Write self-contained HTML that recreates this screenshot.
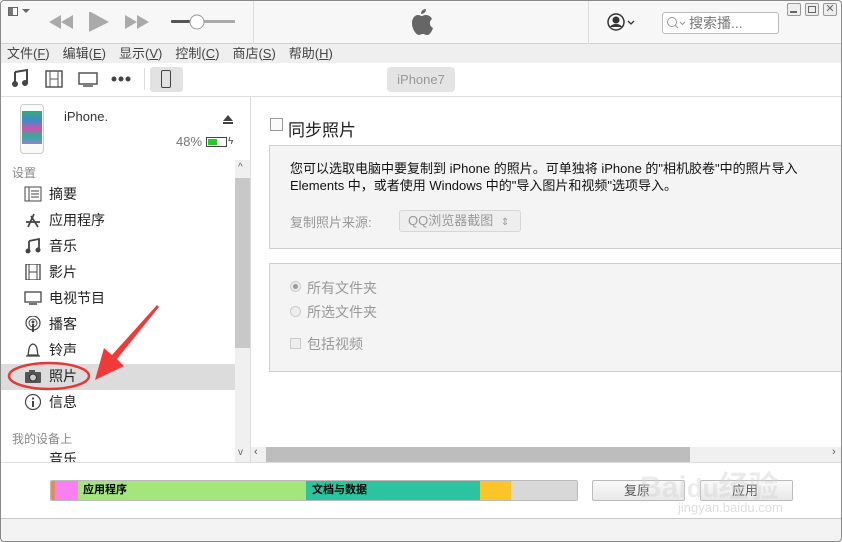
<!DOCTYPE html>
<html><head><meta charset="utf-8"><style>
*{margin:0;padding:0;box-sizing:border-box}
body{width:842px;height:542px;overflow:hidden;background:#fff;font-family:"Liberation Sans","Noto Sans CJK SC",sans-serif;color:#222;position:relative}
.a{position:absolute}
.win{left:0;top:0;width:842px;height:542px;border:1px solid #8a8a8a;border-radius:4px}
.menu span{margin-right:13px}
.side{font-size:14px}
.item{left:0;width:235px;height:26px;line-height:26px;padding-left:49px}
.ic{position:absolute;left:24px;top:5px;width:18px;height:16px}
.p{background:#f4f4f4;border:1px solid #cfcfcf}
.g{color:#999}
</style></head><body>
<div class="a" style="left:0;top:0;width:842px;height:44px;background:#f7f7f7;border-bottom:1px solid #cfcfcf"></div>
<div class="a" style="left:253px;top:0;width:1px;height:44px;background:#ddd"></div>
<div class="a" style="left:588px;top:0;width:1px;height:44px;background:#ddd"></div>
<div class="a" style="left:8px;top:7px;width:10px;height:9px;border:1px solid #666;background:linear-gradient(90deg,#777 50%,#fff 50%)"></div>
<div class="a" style="left:22px;top:9px;width:0;height:0;border:4px solid transparent;border-top:4px solid #666"></div>
<svg class="a" style="left:45px;top:12px" width="210" height="20"><g fill="#aaa"><path d="M4 10L16 3V17Z M16 10L28 3V17Z"/><path d="M44 0L64 11L44 21Z" transform="translate(-0,-1)"/><path d="M80 3L92 10L80 17Z M92 3L104 10L92 17Z"/></g><rect x="126" y="8" width="30" height="3" fill="#555" rx="1"/><rect x="156" y="8" width="34" height="3" fill="#aaa" rx="1"/><circle cx="152" cy="10" r="7" fill="#fff" stroke="#999"/></svg>
<svg class="a" style="left:407px;top:8px" width="28" height="30" viewBox="0 0 28 30"><path fill="#666" d="M19 1c0 3-2 5-5 5 0-3 2-5 5-5zM14 8c2 0 3-1 5-1 3 0 5 2 6 4-3 2-3 7 1 9-1 3-3 7-6 7-2 0-2-1-4-1s-3 1-4 1c-3 0-7-6-7-12 0-5 3-8 6-8 2 0 3 1 3 1z"/></svg>
<svg class="a" style="left:607px;top:12px" width="32" height="20"><circle cx="9" cy="10" r="8" fill="none" stroke="#333" stroke-width="1.5"/><circle cx="9" cy="8" r="3.5" fill="#333"/><path d="M3 15c2-4 10-4 12 0" fill="#333"/><path d="M21 9l3 3 3-3" stroke="#333" fill="none" stroke-width="1.3"/></svg>
<div class="a" style="left:662px;top:12px;width:117px;height:22px;border:1px solid #bbb;border-radius:3px;background:#fff;font-size:14px;line-height:20px;color:#777;padding-left:26px">搜索播...</div>
<svg class="a" style="left:666px;top:16px" width="22" height="14"><circle cx="6" cy="6" r="4.5" fill="none" stroke="#999"/><path d="M9 9l3 3M14 6l2.5 2.5 2.5-2.5" stroke="#999" fill="none"/></svg>
<div class="a" style="left:787px;top:3px;width:14px;height:13px;border:1px solid #999;border-radius:2px;background:#eee"></div>
<div class="a" style="left:805px;top:3px;width:14px;height:13px;border:1px solid #999;border-radius:2px;background:#eee"></div>
<div class="a" style="left:823px;top:3px;width:14px;height:13px;border:1px solid #999;border-radius:2px;background:#eee;font-size:11px;line-height:11px;text-align:center;color:#666">✕</div>
<div class="a" style="left:790px;top:11px;width:7px;height:2px;background:#666"></div>
<div class="a" style="left:808px;top:6px;width:8px;height:7px;border:1px solid #666"></div>
<div class="a menu" style="left:0;top:44px;width:842px;height:19px;background:#efefef;font-size:13px;line-height:19px;padding-left:7px;color:#444"><span>文件(<u>F</u>)</span><span>编辑(<u>E</u>)</span><span>显示(<u>V</u>)</span><span>控制(<u>C</u>)</span><span>商店(<u>S</u>)</span><span>帮助(<u>H</u>)</span></div>
<div class="a" style="left:0;top:96px;width:842px;height:1px;background:#e0e0e0"></div>
<svg class="a" style="left:10px;top:68px" width="175" height="22"><path d="M5 4L17 2V15" stroke="#444" stroke-width="2" fill="none"/><circle cx="5" cy="16" r="3" fill="#444"/><circle cx="15" cy="15" r="3" fill="#444"/><path d="M5 4V16" stroke="#444" stroke-width="2"/><rect x="36" y="3" width="16" height="16" fill="none" stroke="#555" stroke-width="1.5"/><path d="M40 3V19M48 3V19M40 11H48" stroke="#555"/><rect x="69" y="5" width="18" height="11" fill="none" stroke="#555" stroke-width="1.5"/><path d="M73 18H83" stroke="#555" stroke-width="1.5"/><circle cx="104" cy="11" r="2.5" fill="#444"/><circle cx="111" cy="11" r="2.5" fill="#444"/><circle cx="118" cy="11" r="2.5" fill="#444"/><rect x="134" y="0" width="1" height="22" fill="#ddd"/></svg>
<div class="a" style="left:150px;top:67px;width:33px;height:25px;background:#e2e2e2;border-radius:3px"></div>
<div class="a" style="left:161px;top:70px;width:10px;height:18px;border:1.5px solid #444;border-radius:2px"></div>
<div class="a" style="left:387px;top:67px;width:68px;height:25px;background:#e4e4e4;border-radius:4px;font-size:13px;line-height:25px;text-align:center;color:#999">iPhone7</div>
<div class="a" style="left:250px;top:97px;width:1px;height:365px;background:#ddd"></div>
<div class="a" style="left:20px;top:104px;width:24px;height:50px;border:1px solid #ccc;border-radius:4px;background:#fafafa"></div>
<div class="a" style="left:22px;top:111px;width:20px;height:33px;background:linear-gradient(#3a7,#48c 30%,#c5a 55%,#3a9 75%,#88c)"></div>
<div class="a" style="left:64px;top:109px;font-size:13px;color:#333">iPhone.</div>
<div class="a" style="left:223px;top:110px;width:0;height:0;border:5px solid transparent;border-bottom:6px solid #444"></div>
<div class="a" style="left:223px;top:122px;width:10px;height:2px;background:#444"></div>
<div class="a" style="left:176px;top:134px;font-size:13px;color:#777">48%</div>
<div class="a" style="left:206px;top:137px;width:21px;height:10px;border:1px solid #444;padding:1px"><div style="width:9px;height:6px;background:#2c2"></div></div>
<div class="a" style="left:228px;top:136px;font-size:10px;color:#444">ϟ</div>
<div class="a" style="left:12px;top:164px;font-size:12px;color:#888">设置</div>
<div class="a" style="left:12px;top:430px;font-size:12px;color:#888">我的设备上</div>
<div class="a" style="left:235px;top:160px;width:15px;height:302px;background:#f0f0f0"></div>
<div class="a" style="left:235px;top:178px;width:15px;height:170px;background:#c8c8c8"></div>
<div class="a" style="left:238px;top:162px;font-size:10px;color:#666">^</div>
<div class="a" style="left:238px;top:447px;font-size:10px;color:#666">v</div>
<div class="a" style="left:0;top:364px;width:235px;height:26px;background:#dcdcdc"></div>
<div class="side">
<div class="a item" style="top:181px">摘要<svg class="ic" viewBox="0 0 18 16"><rect x="1" y="1" width="16" height="14" fill="none" stroke="#444"/><path d="M5 1V15M7 5H15M7 8H15M7 11H15" stroke="#444"/></svg></div>
<div class="a item" style="top:207px">应用程序<svg class="ic" viewBox="0 0 18 16"><path d="M4 15L10 2M14 15L7 4M2 10H16" stroke="#444" stroke-width="1.7" fill="none"/></svg></div>
<div class="a item" style="top:233px">音乐<svg class="ic" viewBox="0 0 18 16"><path d="M5 3L15 1V12M5 3V13" stroke="#444" stroke-width="1.8" fill="none"/><circle cx="4" cy="13" r="2.5" fill="#444"/><circle cx="14" cy="12" r="2.5" fill="#444"/></svg></div>
<div class="a item" style="top:259px">影片<svg class="ic" viewBox="0 0 18 16"><rect x="2" y="0" width="14" height="16" fill="none" stroke="#444" stroke-width="1.3"/><path d="M5 0V16M13 0V16M5 8H13" stroke="#444"/></svg></div>
<div class="a item" style="top:285px">电视节目<svg class="ic" viewBox="0 0 18 16"><rect x="1" y="2" width="16" height="10" fill="none" stroke="#444" stroke-width="1.3"/><path d="M5 14H13" stroke="#444" stroke-width="1.5"/></svg></div>
<div class="a item" style="top:311px">播客<svg class="ic" viewBox="0 0 18 16"><circle cx="9" cy="7" r="7" fill="none" stroke="#444" stroke-width="1.2"/><circle cx="9" cy="7" r="4" fill="none" stroke="#444"/><circle cx="9" cy="6" r="1.5" fill="#444"/><rect x="8" y="8" width="2" height="8" fill="#444"/></svg></div>
<div class="a item" style="top:337px">铃声<svg class="ic" viewBox="0 0 18 16"><path d="M4 13C5 10 4 3 9 2C14 3 13 10 14 13Z M2 14H16" stroke="#444" stroke-width="1.3" fill="none"/></svg></div>
<div class="a item" style="top:363px">照片<svg class="ic" viewBox="0 0 18 16"><rect x="1" y="4" width="16" height="11" fill="#555" rx="1"/><rect x="5" y="2" width="6" height="3" fill="#555"/><circle cx="9" cy="9.5" r="3.5" fill="#ccc" stroke="#333"/></svg></div>
<div class="a item" style="top:389px">信息<svg class="ic" viewBox="0 0 18 16"><circle cx="9" cy="8" r="7.5" fill="none" stroke="#444" stroke-width="1.2"/><circle cx="9" cy="4.5" r="1.1" fill="#444"/><rect x="8" y="7" width="2" height="6" fill="#444"/></svg></div>
<div class="a item" style="top:448px;height:14px;overflow:hidden;line-height:22px">音乐</div>
</div>
<svg class="a" style="left:0;top:290px" width="170" height="110"><ellipse cx="49" cy="86" rx="40" ry="13" fill="none" stroke="#e53935" stroke-width="2.5"/><path d="M157 15L112 65L104 58L95 90L124 76L117 69L159 17Z" fill="#f03a3a"/></svg>
<div class="a" style="left:270px;top:118px;width:13px;height:13px;border:1px solid #999;background:#fafafa"></div>
<div class="a" style="left:288px;top:116px;font-size:17px;color:#222">同步照片</div>
<div class="a p" style="left:269px;top:145px;width:580px;height:104px"></div>
<div class="a" style="left:290px;top:160px;font-size:13px;line-height:17px;width:560px;white-space:nowrap;color:#111">您可以选取电脑中要复制到 iPhone 的照片。可单独将 iPhone 的"相机胶卷"中的照片导入<br>Elements 中，或者使用 Windows 中的"导入图片和视频"选项导入。</div>
<div class="a g" style="left:290px;top:212px;font-size:13px">复制照片来源:</div>
<div class="a g" style="left:399px;top:210px;width:122px;height:22px;border:1px solid #d6d6d6;border-radius:3px;background:#eee;font-size:13px;line-height:20px;padding-left:8px">QQ浏览器截图 <span style="font-size:10px;margin-left:4px">⇕</span></div>
<div class="a p" style="left:269px;top:263px;width:580px;height:109px"></div>
<div class="a" style="left:290px;top:281px;width:11px;height:11px;border-radius:50%;border:1px solid #ccc;background:radial-gradient(#999 2px,#eee 3px)"></div>
<div class="a g" style="left:307px;top:278px;font-size:14px">所有文件夹</div>
<div class="a" style="left:290px;top:306px;width:11px;height:11px;border-radius:50%;border:1px solid #ccc;background:#eee"></div>
<div class="a g" style="left:307px;top:302px;font-size:14px">所选文件夹</div>
<div class="a" style="left:290px;top:338px;width:11px;height:11px;border:1px solid #ccc;background:#eee"></div>
<div class="a g" style="left:307px;top:334px;font-size:14px">包括视频</div>
<div class="a" style="left:251px;top:447px;width:591px;height:15px;background:#f0f0f0"></div>
<div class="a" style="left:266px;top:447px;width:424px;height:15px;background:#bdbdbd"></div>
<div class="a" style="left:254px;top:446px;font-size:11px;color:#555">‹</div>
<div class="a" style="left:832px;top:446px;font-size:11px;color:#555">›</div>
<div class="a" style="left:0;top:462px;width:842px;height:1px;background:#ddd"></div>
<div class="a" style="left:50px;top:480px;width:528px;height:21px;border:1px solid #bbb;border-radius:2px;overflow:hidden;font-size:11px;font-weight:bold;line-height:19px;color:#000">
<div class="a" style="left:0;top:0;width:4px;height:21px;background:#e98a5a"></div>
<div class="a" style="left:4px;top:0;width:23px;height:21px;background:#f880f0"></div>
<div class="a" style="left:27px;top:0;width:228px;height:21px;background:#a4e67b;padding-left:5px">应用程序</div>
<div class="a" style="left:255px;top:0;width:174px;height:21px;background:#2cc3a0;padding-left:6px">文档与数据</div>
<div class="a" style="left:429px;top:0;width:31px;height:21px;background:#fbc52a"></div>
<div class="a" style="left:460px;top:0;width:68px;height:21px;background:#d8d8d8"></div>
</div>
<div class="a" style="left:592px;top:480px;width:93px;height:21px;border:1px solid #bbb;border-radius:2px;background:linear-gradient(#fafafa,#e8e8e8);font-size:13px;line-height:19px;padding-left:31px;color:#555">复原</div>
<div class="a" style="left:700px;top:480px;width:93px;height:21px;border:1px solid #bbb;border-radius:2px;background:linear-gradient(#fafafa,#e8e8e8);font-size:13px;line-height:19px;padding-left:31px;color:#555">应用</div>
<div class="a" style="left:640px;top:462px;font-size:30px;font-weight:bold;color:rgba(210,210,210,.45)">Bai<span style="font-size:26px">du</span>经验</div>
<div class="a" style="left:678px;top:500px;font-size:13px;color:rgba(200,200,200,.6)">jingyan.baidu.com</div>
<div class="a" style="left:0;top:518px;width:842px;height:24px;background:#f3f3f3;border-top:1px solid #c8c8c8"></div>
<div class="a win"></div>
</body></html>
